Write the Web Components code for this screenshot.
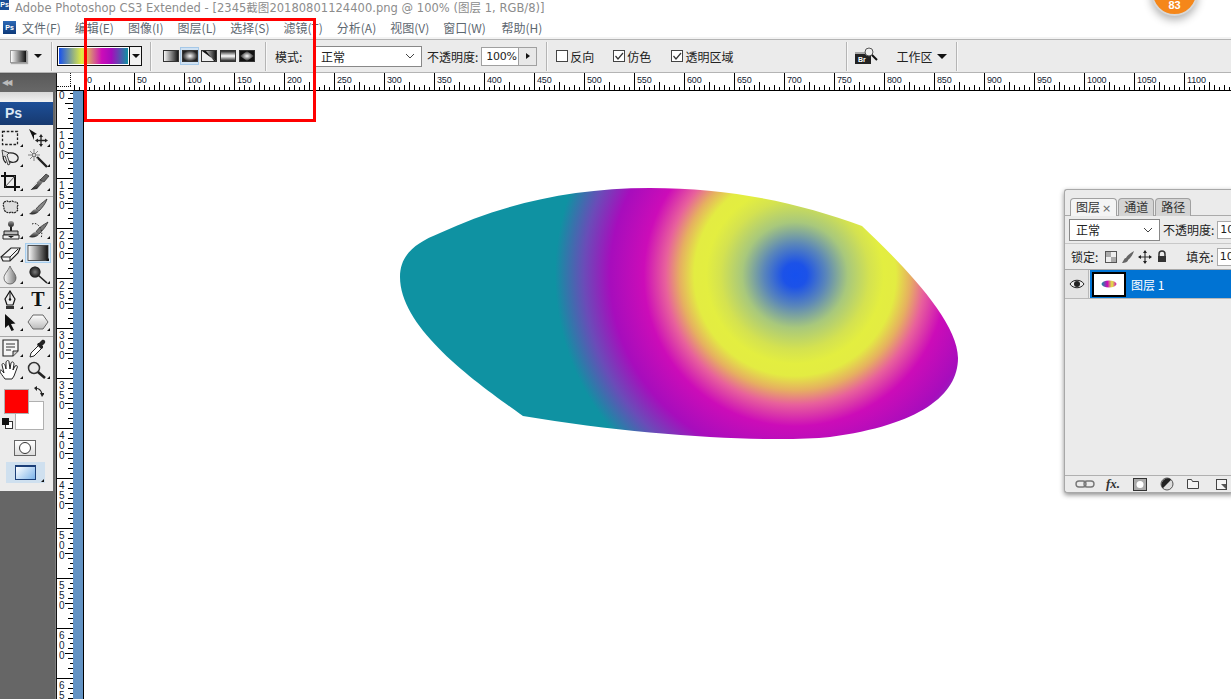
<!DOCTYPE html>
<html lang="zh"><head><meta charset="utf-8"><title>Photoshop</title>
<style>
html,body{margin:0;padding:0;background:#fff;overflow:hidden;width:1231px;height:699px}
body{font-family:"Noto Sans CJK SC","Liberation Sans",sans-serif;font-size:12px}
</style></head><body>
<ps-app></ps-app>
<script>
const CJK='"Noto Sans CJK SC","Noto Sans",sans-serif';
const tk=(deg,w,h)=>`repeating-linear-gradient(${deg}deg,transparent 0 4px,#000 4px 5px) left bottom/${w} ${h} no-repeat`;
const tk2=(deg,w,h)=>`repeating-linear-gradient(${deg}deg,transparent 0 9px,#000 9px 10px) left bottom/${w} ${h} no-repeat`;
const TICKH=`linear-gradient(#000,#000) 24px 100%/1px 8px no-repeat,${tk2(90,'100%','5px')},${tk(90,'100%','3px')}`;
const TICKP=`${tk2(270,'100%','5px')},${tk(270,'100%','3px')}`;
const vt=(deg)=>`repeating-linear-gradient(${deg}deg,transparent 0 9px,#000 9px 10px) right top/5px 100% no-repeat,repeating-linear-gradient(${deg}deg,transparent 0 4px,#000 4px 5px) right top/3px 100% no-repeat`;
const TICKV=`linear-gradient(#000,#000) right 24px/8px 1px no-repeat,${vt(180)}`;
const TICKF=`linear-gradient(#000,#000) right 12px/8px 1px no-repeat,${vt(0)}`;
const DEFS=`<defs>
<linearGradient id="g" x1="0" x2="1" y1="0" y2="0"><stop offset="0" stop-color="#fff"/><stop offset="1" stop-color="#111"/></linearGradient>
<linearGradient id="v" x1="0" x2="0" y1="0" y2="1"><stop offset="0" stop-color="#999"/><stop offset="1" stop-color="#222"/></linearGradient>
<radialGradient id="r"><stop offset="0" stop-color="#fff"/><stop offset="1" stop-color="#222"/></radialGradient>
</defs>`;
const ICONS={
marquee:`<rect x="3.500" y="3.500" width="15" height="13" fill="none" stroke="#222" stroke-width="1.300" stroke-dasharray="2.600 1.600"/>`,
move:`<path d="M3 1l8 5-3 1 0 5z" fill="#111"/><path d="M15 8v9M11 12.500h9" stroke="#222" stroke-width="1.300"/><path d="M15 6l2 3h-4zM15 19l2-3h-4zM9 12.500l3-2v4zM22 12.500l-3-2v4z" fill="#222"/>`,
lasso:`<path d="M7 15C3 11 3 6 9 5c6-1 11 2 10 6-1 4-7 4-9 2" fill="none" stroke="#222" stroke-width="1.200"/><path d="M3 2l7 3-2 2 3 9-2 1-3-9-2 1z" fill="#ddd" stroke="#222" stroke-width=".8"/>`,
wand:`<path d="M11 9l10 10" stroke="#222" stroke-width="2.400"/><path d="M8 1v12M2 7h12M4 3l8 8M12 3l-8 8" stroke="#777" stroke-width=".9"/><circle cx="8" cy="7" r="1.500" fill="#fff" stroke="#333" stroke-width=".6"/>`,
crop:`<path d="M6 0v15h15M2 4h14v15" fill="none" stroke="#111" stroke-width="2"/><path d="M6 15L16 4" stroke="#555" stroke-width="1"/>`,
slice:`<path d="M4 18L14 7l3 3-6 7z" fill="url(#v)"/><path d="M14 8l6-6 3 2-5 6z" fill="#666" stroke="#111" stroke-width=".6"/><path d="M4 18l7-7" stroke="#ddd"/>`,
heal:`<path d="M5 5l3-1 2 1 3-1 2 1 3 0 1 3-1 2 1 3-2 2-2 1-3-1-2 1-3-1-2-2 0-3-1-2z" fill="#ddd" stroke="#222" stroke-width="1.200" stroke-dasharray="2 .8"/>`,
brush:`<path d="M21 2C17 5 12 9 10 12l3 2c3-3 7-8 8-12z" fill="#888" stroke="#222" stroke-width=".7"/><path d="M10 12c-3 0-4 3-7 5 4 1 9 0 10-3z" fill="url(#v)"/>`,
stamp:`<circle cx="12" cy="4" r="3" fill="url(#v)"/><path d="M11 7h2v4h-2z" fill="#222"/><path d="M5 11h14v4H5z" fill="#bbb" stroke="#222"/><path d="M4 15h16v4H4z" fill="#eee" stroke="#222"/><path d="M9 16h6l-3 2z" fill="#111"/>`,
history:`<path d="M22 2C17 5 12 8 10 12l3 2c3-3 7-7 9-12z" fill="#777" stroke="#222" stroke-width=".7"/><path d="M10 12c-3 0-4 2-7 5 4 1 9 0 10-3z" fill="url(#v)"/><path d="M6 4c6-3 12 7 9 14" fill="none" stroke="#222" stroke-dasharray="1.500 1.500"/>`,
eraser:`<path d="M2 14L12 5h9l-2 5-8 8H4z" fill="#f4f4f4" stroke="#222" stroke-width="1.200"/><path d="M2 14h9l8-8M11 14v4" fill="none" stroke="#222" stroke-width="1"/>`,
gradient:`<rect x="2" y="2.500" width="20" height="15" fill="url(#g)" stroke="#333" stroke-width=".8"/>`,
drop:`<path d="M11 1C9 6 5 9 5 13a6 6 0 0 0 12 0C17 9 13 6 11 1z" fill="url(#dropg)" stroke="#555" stroke-width=".8"/><defs><linearGradient id="dropg" x1="0" x2="1"><stop offset="0" stop-color="#fff"/><stop offset="1" stop-color="#777"/></linearGradient></defs>`,
burn:`<circle cx="9" cy="7" r="5.500" fill="url(#r)"/><circle cx="9" cy="7" r="5.500" fill="#111" opacity=".55"/><path d="M12 10l9 8" stroke="#222" stroke-width="1.600"/>`,
pen:`<path d="M11 1l5 8-2 6H8L6 9z" fill="#eee" stroke="#111" stroke-width="1.200"/><path d="M11 1v8" stroke="#111"/><circle cx="11" cy="9.500" r="1.200" fill="#111"/><path d="M7 16h8v3H7z" fill="#333"/>`,
arrow:`<path d="M6 2l0 14 3.500-3 3 6 2.500-1-3-6 4.500-.5z" fill="#111"/>`,
hex:`<path d="M7 3h10l5 7-5 7H7L2 10z" fill="url(#hexg)" stroke="#666"/><defs><linearGradient id="hexg" x1="0" x2="0" y1="0" y2="1"><stop offset="0" stop-color="#fff"/><stop offset="1" stop-color="#bbb"/></linearGradient></defs>`,
note:`<path d="M4 2h15v11l-5 5H4z" fill="#f5f5f5" stroke="#222" stroke-width="1.100"/><path d="M19 13h-5v5" fill="#ccc" stroke="#222"/><path d="M7 6h9M7 9h9M7 12h5" stroke="#333"/>`,
dropper:`<path d="M4 19l1-4 9-9 3 3-9 9z" fill="#fff" stroke="#222"/><path d="M13 5l3-3c2-1 4 1 3 3l-3 3 1 2-2 1-4-4 1-2z" fill="#222"/>`,
hand:`<path d="M6 19c-2-3-5-6-5-8s2-1 3 1l1 1-2-8c0-2 2-2 3 0l1 4V2c1-2 3-2 3 0l1 7 1-6c1-2 3-1 3 1l-1 6 2-4c2-1 3 0 2 2l-3 8-2 3z" fill="#fff" stroke="#222" stroke-width="1"/>`,
zoom:`<circle cx="8" cy="8" r="5.500" fill="#e8e8e8" stroke="#333" stroke-width="1.500"/><path d="M12 12l7 6" stroke="#222" stroke-width="2.600"/>`
};

function el(name,cls){customElements.define(name,cls)}
class Base extends HTMLElement{
  constructor(){super();this.attachShadow({mode:'open'})}
  connectedCallback(){if(!this._d){this._d=1;this.shadowRoot.innerHTML=this.html()}}
}
el('ps-titlebar',class extends Base{html(){return `<style>
:host{display:flex;align-items:flex-start;height:17px;background:#fff;overflow:hidden;position:relative}
.l{width:9px;height:10px;background:#1c4f96;color:#fff;font:bold 7px "Liberation Sans";line-height:10px;text-align:center;overflow:hidden}
.t{margin-left:6px;font:11.5px/16px "DejaVu Sans",${CJK};color:#8c8c8c;white-space:nowrap;letter-spacing:.03px}
</style><div class="l">Ps</div><div class="t">Adobe Photoshop CS3 Extended - [2345截图20180801124400.png @ 100% (图层 1, RGB/8)]</div>`}});

el('ps-menubar',class extends Base{html(){
const m=['文件(F)','编辑(E)','图像(I)','图层(L)','选择(S)','滤镜(T)','分析(A)','视图(V)','窗口(W)','帮助(H)'];
return `<style>
:host{display:flex;align-items:center;height:22px;box-sizing:border-box;padding:1px 0 2px 3px;background:#fff;gap:14px;font:12px ${CJK};color:#5d6770}
.l{width:13px;height:13px;background:linear-gradient(#2d69b6,#0e3a7a);color:#fff;font:bold 7px "Liberation Sans";line-height:14px;text-align:center;margin-right:-8px}
span{white-space:nowrap}
span:last-child{margin-left:1.500px}
</style><div class="l">Ps</div>${m.map(x=>`<span>${x}</span>`).join('')}`}});

el('ps-check',class extends Base{html(){
const on=this.hasAttribute('on');
return `<style>:host{display:inline-flex;align-items:center;gap:2px;font:12px ${CJK};color:#222;white-space:nowrap}
i{display:block;width:10px;height:10px;border:1px solid #444;background:#fff}svg{display:block}</style>
<i>${on?'<svg width="10" height="10"><path d="M1.500 5l2.500 3 5-6" fill="none" stroke="#333" stroke-width="1.200"/></svg>':''}</i><slot></slot>`}});

el('ps-options',class extends Base{html(){
const types=[
 `<rect x=".5" y=".5" width="15" height="11" fill="url(#g)" stroke="#333"/>`,
 `<rect x=".5" y=".5" width="15" height="11" fill="url(#rr)" stroke="#333"/>`,
 `<rect x=".5" y=".5" width="15" height="11" fill="#eee" stroke="#333"/><path d="M1 1h14v10z" fill="url(#g)"/><path d="M1 1h4l8 10h2v0z" fill="#111"/>`,
 `<rect x=".5" y=".5" width="15" height="11" fill="url(#refl)" stroke="#333"/>`,
 `<rect x=".5" y=".5" width="15" height="11" fill="#111" stroke="#333"/><path d="M8 1l7 5-7 5-7-5z" fill="url(#rr)"/>`];
const svgdefs=`<svg width="0" height="0" style="position:absolute"><defs>
<linearGradient id="g"><stop offset="0" stop-color="#fff"/><stop offset="1" stop-color="#111"/></linearGradient>
<radialGradient id="rr"><stop offset="0" stop-color="#fff"/><stop offset="1" stop-color="#222"/></radialGradient>
<linearGradient id="refl" x1="0" x2="0" y1="0" y2="1"><stop offset="0" stop-color="#111"/><stop offset=".5" stop-color="#fff"/><stop offset="1" stop-color="#111"/></linearGradient>
</defs></svg>`;
return `<style>
:host{display:flex;align-items:center;height:32px;background:#ebebeb;border-top:1px solid #b4b4b4;border-bottom:1px solid #b4b4b4;box-shadow:0 -2px 0 #f3f3f3;font:12px ${CJK};color:#222;box-sizing:content-box;position:relative}
.sep{width:1px;height:29px;background:#b5b5b5;flex:none;border-right:1px solid #f8f8f8}
.ps{width:17px;height:13px;margin-left:10px;background:linear-gradient(90deg,#fff,#111);border:1px solid #999;box-sizing:border-box;box-shadow:1px 1px 1px #aaa}
.tri{width:0;height:0;border:4px solid transparent;border-top:4px solid #111;border-bottom:0;flex:none}
.gb{display:flex;width:85px;height:20px;margin-left:4px;border:1px solid #111;box-sizing:border-box;background:#fff}
.gb b{display:block;flex:1;margin:0;border:1px solid #fff;background:linear-gradient(90deg,#1650ee,#e3ee40 33%,#cc0cb8 62%,#a50cbc 76%,#0f92a2)}
.gb i{display:flex;align-items:center;justify-content:center;width:11px;background:#f3f3f3;border-left:1px solid #111}
.types{display:flex;margin-left:9px}
.types div{width:19px;height:18px;display:flex;align-items:center;justify-content:center;box-sizing:border-box}
.types div.on{background:#cfe1f2;border:1px solid #a5c8e8}
.sel{display:flex;align-items:center;justify-content:space-between;height:21px;box-sizing:border-box;width:108px;border:1px solid #888;background:#fff;padding:0 6px}
.inp{display:flex;width:56px;height:19px;box-sizing:border-box;border:1px solid #a0a0a0;background:#fff;margin-left:3px}
.inp span{flex:1;padding-left:4px;font:11px/17px "DejaVu Sans";letter-spacing:-.3px}
.inp i{display:flex;align-items:center;justify-content:center;width:17px;background:#e8e8e8;border-left:1px solid #a0a0a0}
.rt{width:0;height:0;border:3.500px solid transparent;border-left:4px solid #111;border-right:0}
svg{display:block}
</style>${svgdefs}
<div class="ps"></div><div class="tri" style="margin-left:7px"></div>
<div class="sep" style="margin-left:9px"></div>
<div class="gb"><b></b><i><span class="tri"></span></i></div>
<div class="sep" style="margin-left:8px"></div>
<div class="types">${types.map((t,i)=>`<div class="${i==1?'on':''}"><svg width="16" height="12">${t}</svg></div>`).join('')}</div>
<div class="sep" style="margin-left:9px"></div>
<span style="margin-left:8px;width:32px;white-space:nowrap">模式:</span>
<div class="sel" style="margin-left:7px"><span>正常</span><svg width="10" height="6"><path d="M1 1l4 4 4-4" fill="none" stroke="#444"/></svg></div>
<span style="margin-left:5px;white-space:nowrap">不透明度:</span>
<div class="inp"><span>100%</span><i><b class="rt"></b></i></div>
<div class="sep" style="margin-left:9px"></div>
<ps-check style="margin-left:8px">反向</ps-check>
<ps-check on style="margin-left:19px">仿色</ps-check>
<ps-check on style="margin-left:20px">透明区域</ps-check>
<div class="sep" style="margin-left:113px"></div>
<svg style="margin-left:6px" width="24" height="18" viewBox="0 0 24 18"><path d="M1 5h7l1 1h8v11H1z" fill="#222"/><rect x="1" y="5" width="16" height="2" fill="#aaa"/><text x="4" y="15" font-family="Liberation Sans" font-size="7" font-weight="bold" fill="#fff">Br</text><circle cx="15" cy="5" r="4" fill="#eee" stroke="#555"/><path d="M18 8l5 5" stroke="#111" stroke-width="2"/></svg>
<span style="margin-left:18px;white-space:nowrap;font-size:12px">工作区</span><div class="tri" style="margin-left:5px;border-width:5px 5px 0"></div>
<div class="sep" style="margin-left:9px"></div>`}});

el('ps-ruler-h',class extends Base{html(){
let c='';for(let v=0;v<=1100;v+=50)c+=`<div class="c">${v}</div>`;
return `<style>
:host{display:flex;height:17px;background:#fff;border-bottom:1px solid #000;box-sizing:content-box;overflow:hidden;font:9px "Liberation Sans";color:#123;flex:none}
.k{width:16px;flex:none;background:#fff;position:relative}
.k:before{content:"";position:absolute;left:13px;top:0;height:13px;border-left:1px dotted #111}
.k:after{content:"";position:absolute;left:0;top:13px;width:14px;border-top:1px dotted #111}
.p{width:11px;flex:none;background:${TICKP}}
.c{flex:none;width:50px;box-sizing:border-box;border-left:1px solid #000;padding-left:2px;line-height:14px;letter-spacing:-.15px;background:${TICKH}}
</style><div class="k"></div><div class="p"></div>${c}`}});
el('ps-ruler-v',class extends Base{html(){
let c='';for(let v=100;v<=650;v+=50)c+=`<div class="c"><span>${v}</span></div>`;
return `<style>
:host{display:block;width:16px;flex:none;background:#fff;overflow:hidden;font:10px "Liberation Sans";color:#123;box-sizing:border-box}
.first{height:37px;box-sizing:border-box;padding:0 0 0 2px;line-height:10px;background:${TICKF}}
.c{height:50px;box-sizing:border-box;border-top:1px solid #000;padding:2px 0 0 2px;background:${TICKV}}
span{display:block;width:6px;word-break:break-all;line-height:10px}
</style><div class="first">0</div>${c}`}});

el('ps-tool',class extends Base{html(){
const n=this.getAttribute('icon');
const t=n==='T'?`<text x="12" y="16" text-anchor="middle" font-family="Liberation Serif" font-weight="bold" font-size="20" fill="#111">T</text>`:ICONS[n];
return `<style>
:host{display:flex;align-items:center;justify-content:center;width:26px;height:20px;position:relative;box-sizing:border-box}
:host([on]){background:#d5e6f5;border:1px solid #a5cdee}
:host([more]):after{content:"";position:absolute;right:1px;bottom:1px;border:0 solid transparent;border-width:0 0 3px 3px;border-bottom-color:#111}
svg{display:block}
</style><svg width="24" height="20" viewBox="0 0 24 20">${DEFS}${t}</svg>`}});

el('ps-toolbar',class extends Base{html(){
const row=(mt,a,b)=>`<div class="row" style="margin-top:${mt}px"><ps-tool icon="${a}" more></ps-tool><ps-tool icon="${b}" ${b==='gradient'?'on':''} more></ps-tool></div>`;
return `<style>
:host{display:block;width:53px;background:#ececec;height:399px;font:bold 14px "Liberation Sans"}
.band{height:10px;background:linear-gradient(#d8d8d8,#f2f2f2)}
.ps{height:23px;background:linear-gradient(#1d4f98,#17396f);color:#dce8f5;padding-left:5px;line-height:23px;box-sizing:border-box}
.row{display:flex;height:20px;padding:0;margin-left:-2px;gap:0}
.row ps-tool:last-child{margin-left:1px}
.s{height:1px;background:#a8a8a8}
.col{position:relative;height:42px;margin-top:9px}
.fg{position:absolute;left:4px;top:0;width:25px;height:25px;background:#f00;border:1px solid #b0b0b0;box-sizing:border-box;z-index:1}
.bg{position:absolute;left:15px;top:12px;width:29px;height:29px;background:#fff;border:1px solid #b0b0b0;box-sizing:border-box}
.sw{position:absolute;left:33px;top:-3px}
.df{position:absolute;left:2px;top:29px}
.qm{width:22px;height:16px;margin:9px 0 0 14px;border:1px solid #666;background:linear-gradient(#fff,#ddd);box-sizing:border-box;display:flex;align-items:center;justify-content:center}
.qm i{width:10px;height:10px;border:1px solid #333;border-radius:50%;background:#fff;display:block}
.sm{width:39px;height:21px;margin:6px 0 0 6px;background:#cfe0ef;position:relative;display:flex;align-items:center;justify-content:center}
.sm:after{content:"";position:absolute;right:1px;bottom:1px;border:0 solid transparent;border-width:0 0 3px 3px;border-bottom-color:#111}
.sm i{display:block;width:21px;height:15px;box-sizing:border-box;border:1px solid #1c3f78;border-top-width:2px;background:linear-gradient(135deg,#fff,#7db4ea)}
</style>
<div class="band"></div><div class="ps">Ps</div>
${row(3,'marquee','move')}${row(0,'lasso','wand')}${row(4,'crop','slice')}
<div class="s" style="margin-top:4px"></div>
${row(0,'heal','brush')}${row(3,'stamp','history')}${row(3,'eraser','gradient')}${row(2,'drop','burn')}
<div class="s" style="margin-top:2px"></div>
${row(2,'pen','T')}${row(2,'arrow','hex')}
<div class="s" style="margin-top:4px"></div>
${row(1,'note','dropper')}${row(2,'hand','zoom')}
<div class="col">
 <div class="bg"></div><div class="fg"></div>
 <svg class="sw" width="11" height="11" viewBox="0 0 11 11"><path d="M2 2c4 0 6 2 7 6" fill="none" stroke="#222" stroke-width="1.200"/><path d="M4 0v5L1 2zM7 7h5L9 11z" fill="#222"/></svg>
 <svg class="df" width="11" height="11"><rect x="3.500" y="3.500" width="7" height="7" fill="#fff" stroke="#333"/><rect x="0" y="0" width="7" height="7" fill="#111"/></svg>
</div>
<div class="qm"><i></i></div>
<div class="sm"><i></i></div>`}});

el('ps-dock',class extends Base{html(){return `<style>
:host{display:block;width:57px;flex:none;background:#666;border-top:1px solid #555;border-right:1px solid #111;box-sizing:border-box;box-shadow:inset -1px 0 0 #808080;height:100%}
.h{height:18px;color:#bbb;font:8px "DejaVu Sans";line-height:18px;padding-left:2px;letter-spacing:-2px;background:linear-gradient(#5a5a5a,#686868)}
</style><div class="h">◀◀</div><ps-toolbar></ps-toolbar>`}});

el('ps-canvas',class extends Base{html(){return `<style>
:host{display:block;flex:1;background:#fff;position:relative;overflow:hidden;border-left:1px solid #000}
svg{position:absolute;left:306px;top:89px;display:block}
</style>
<svg width="600" height="270" viewBox="390 180 600 270">
<defs><radialGradient id="b" gradientUnits="userSpaceOnUse" cx="795" cy="275" r="240">
<stop offset="0" stop-color="#1650ee"/><stop offset=".05" stop-color="#1c52e8"/><stop offset=".13" stop-color="#5a86ba"/><stop offset=".22" stop-color="#a8c87c"/><stop offset=".31" stop-color="#d4e250"/><stop offset=".37" stop-color="#e3ee40"/><stop offset=".42" stop-color="#e3ec42"/><stop offset=".48" stop-color="#e6b060"/><stop offset=".54" stop-color="#e8609c"/><stop offset=".63" stop-color="#cc0cb8"/><stop offset=".77" stop-color="#a70dbc"/><stop offset=".88" stop-color="#6a4cb8"/><stop offset="1" stop-color="#0f92a2"/></radialGradient></defs>
<path fill="url(#b)" d="M400 277C400 255 415 243 440 233C500 205 570 188 650 188C730 188 800 203 862 226C900 262 958 320 958 358C958 395 920 425 830 437C770 443 640 436 523 416C480 385 400 330 400 277Z"/>
</svg>`}});

el('ps-layers',class extends Base{html(){return `<style>
:host{display:flex;flex-direction:column;width:170px;height:304px;background:#ebebeb;border:1px solid #a8a8a8;border-right:0;border-radius:3px 0 0 3px;box-sizing:border-box;box-shadow:0 2px 5px rgba(0,0,0,.45);font:12px ${CJK};color:#222;overflow:hidden}
.tabs{display:flex;height:26px;padding:8px 0 0 5px;box-sizing:border-box;border-bottom:1px solid #aaa;gap:1px;flex:none}
.tab{height:18px;padding:0 5px;background:#d4d4d4;border:1px solid #a0a0a0;border-bottom:0;border-radius:4px 4px 0 0;line-height:16px;white-space:nowrap;color:#333;box-sizing:border-box}
.tab.on{background:#f4f4f4;height:18px;color:#333}
.tab small{font:11px "DejaVu Sans";color:#666;margin-left:2px}
.r1{display:flex;align-items:center;height:28px;padding-left:4px;border-bottom:1px solid #c8c8c8;box-sizing:border-box;flex:none}
.sel{display:flex;align-items:center;justify-content:space-between;width:91px;height:22px;box-sizing:border-box;border:1px solid #888;background:#fff;padding:0 6px;flex:none}
.sel svg{display:block}
.inp{width:14px;overflow:hidden;height:18px;border:1px solid #aaa;border-right:0;background:#fff;box-sizing:border-box;font:11px "DejaVu Sans";padding-left:2px;margin-left:3px;line-height:16px;flex:none}
.r2{display:flex;align-items:center;height:26px;padding-left:6px;box-sizing:border-box;border-bottom:1px solid #a8a8a8;flex:none}
.r2 svg{display:block}
.layer{display:flex;height:28px;border-bottom:1px solid #b8b8b8;flex:none;box-sizing:content-box}
.eye{width:24px;display:flex;align-items:center;justify-content:center;border-right:1px solid #b8b8b8;box-sizing:border-box;background:#e4e4e4;flex:none;margin-right:1px}
.sel2{flex:1;background:#0073d3;color:#fff;display:flex;align-items:center;padding-left:2px}
.th{width:34px;height:25px;background:#fff;border:2px solid #000;box-sizing:border-box;display:flex;align-items:center;justify-content:center;outline:1px solid #fff;outline-offset:-3px;flex:none}
.nm{margin-left:5px;white-space:nowrap}
.sp{flex:1}
.foot{display:flex;align-items:center;border-top:1px solid #b0b0b0;flex:none;height:16px;position:relative;padding-left:10px;color:#555}
.foot svg{display:block}
</style>
<div class="tabs"><div class="tab on">图层<small>×</small></div><div class="tab">通道</div><div class="tab">路径</div></div>
<div class="r1"><div class="sel"><span>正常</span><svg width="10" height="6"><path d="M1 1l4 4 4-4" fill="none" stroke="#444"/></svg></div><span style="margin-left:3px;white-space:nowrap">不透明度:</span><div class="inp">10</div></div>
<div class="r2"><span style="white-space:nowrap">锁定:</span>
<svg style="margin-left:7px" width="12" height="12"><rect x=".5" y=".5" width="11" height="11" fill="#eee" stroke="#555"/><path d="M1 1h5v5H1zM6 6h5v5H6z" fill="#aaa"/></svg>
<svg style="margin-left:4px" width="14" height="14" viewBox="0 0 14 14"><path d="M13 1C9 3 6 6 5 8l2 2c3-2 5-6 6-9zM5 8c-2 0-2 2-4 5 3 0 6-1 6-3z" fill="#666"/></svg>
<svg style="margin-left:3px" width="14" height="14" viewBox="0 0 14 14"><path d="M7 1v12M1 7h12" stroke="#333" stroke-width="1.200"/><path d="M7 0l2 3H5zM7 14l2-3H5zM0 7l3-2v4zM14 7l-3-2v4z" fill="#222"/></svg>
<svg style="margin-left:4px" width="12" height="13" viewBox="0 0 12 13"><path d="M3 6V4a3 3 0 0 1 6 0v2" fill="none" stroke="#333" stroke-width="1.500"/><rect x="2" y="6" width="8" height="6" fill="#333"/></svg>
<span style="margin-left:18px;white-space:nowrap">填充:</span><div class="inp">10</div></div>
<div class="layer"><div class="eye"><svg width="16" height="10" viewBox="0 0 16 10"><path d="M1 5c3-5 11-5 14 0-3 5-11 5-14 0z" fill="#eee" stroke="#222"/><circle cx="8" cy="5" r="3" fill="#222"/></svg></div>
<div class="sel2"><div class="th"><svg width="16" height="8" viewBox="0 0 16 8"><defs><linearGradient id="t"><stop offset="0" stop-color="#0f92a2"/><stop offset=".4" stop-color="#cc0cb8"/><stop offset=".7" stop-color="#e3ee40"/><stop offset="1" stop-color="#cc0cb8"/></linearGradient></defs><ellipse cx="8" cy="4" rx="7.500" ry="3.500" fill="url(#t)"/></svg></div><span class="nm">图层 1</span></div></div>
<div class="sp"></div>
<div class="foot">
<svg width="20" height="10" viewBox="0 0 20 10"><rect x="1" y="2" width="10" height="6" rx="3" fill="none" stroke="#777" stroke-width="1.400"/><rect x="9" y="2" width="10" height="6" rx="3" fill="none" stroke="#777" stroke-width="1.400"/></svg>
<span style="margin-left:11px;font:italic bold 13px 'Liberation Serif';color:#333;width:20px;white-space:nowrap">fx.</span>
<svg style="margin-left:7px" width="14" height="13"><rect x=".5" y=".5" width="13" height="12" fill="#aaa" stroke="#333"/><circle cx="7" cy="6.500" r="3.500" fill="#fff"/></svg>
<svg style="margin-left:13px" width="14" height="14"><circle cx="7" cy="7" r="6" fill="#ddd" stroke="#555"/><path d="M2.800 11.200L11.200 2.800A6 6 0 0 0 2.800 11.200z" fill="#222"/></svg>
<svg style="margin-left:13px" width="12" height="10"><path d="M.5 9.500v-9h4l1 2h6v7z" fill="#f4f4f4" stroke="#444"/></svg>
<svg style="margin-left:17px" width="11" height="11"><rect x=".5" y=".5" width="10" height="10" fill="#f4f4f4" stroke="#444"/><path d="M5 5h5v5z" fill="#555"/></svg>
</div>`}});

el('ps-badge',class extends Base{html(){return `<style>
:host{position:absolute;left:1151px;top:-31px;width:47px;height:47px;border-radius:50%;background:#f5871a;border:2px solid #d8d8d8;box-sizing:border-box;box-shadow:0 4px 8px rgba(0,0,0,.3);color:#fff;font:bold 11px/12px "Liberation Sans";display:flex;align-items:flex-end;justify-content:center;padding-bottom:3px;z-index:6}
</style><span>83</span>`}});
el('ps-annot',class extends Base{html(){return `<style>
:host{position:absolute;left:84px;top:18px;width:232px;height:104px;border:3px solid #f00;box-sizing:border-box;z-index:5;pointer-events:none}
</style>`}});

el('ps-app',class extends Base{html(){return `<style>
:host{display:flex;flex-direction:column;width:1231px;height:699px;position:relative;overflow:hidden;background:#fff}
.work{display:flex;flex:1;min-height:0}
.right{display:flex;flex-direction:column;flex:1;min-width:0}
.body{display:flex;flex:1;min-height:0}
.strip{width:10px;flex:none;background:#6393c4}
ps-layers{position:absolute;left:1064px;top:189px;z-index:4}
</style>
<ps-titlebar></ps-titlebar><ps-menubar></ps-menubar><ps-options></ps-options>
<div class="work"><ps-dock></ps-dock><div class="right"><ps-ruler-h></ps-ruler-h><div class="body"><ps-ruler-v></ps-ruler-v><div class="strip"></div><ps-canvas></ps-canvas></div></div></div>
<ps-layers></ps-layers><ps-annot></ps-annot><ps-badge></ps-badge>`}});
</script>
</body></html>
